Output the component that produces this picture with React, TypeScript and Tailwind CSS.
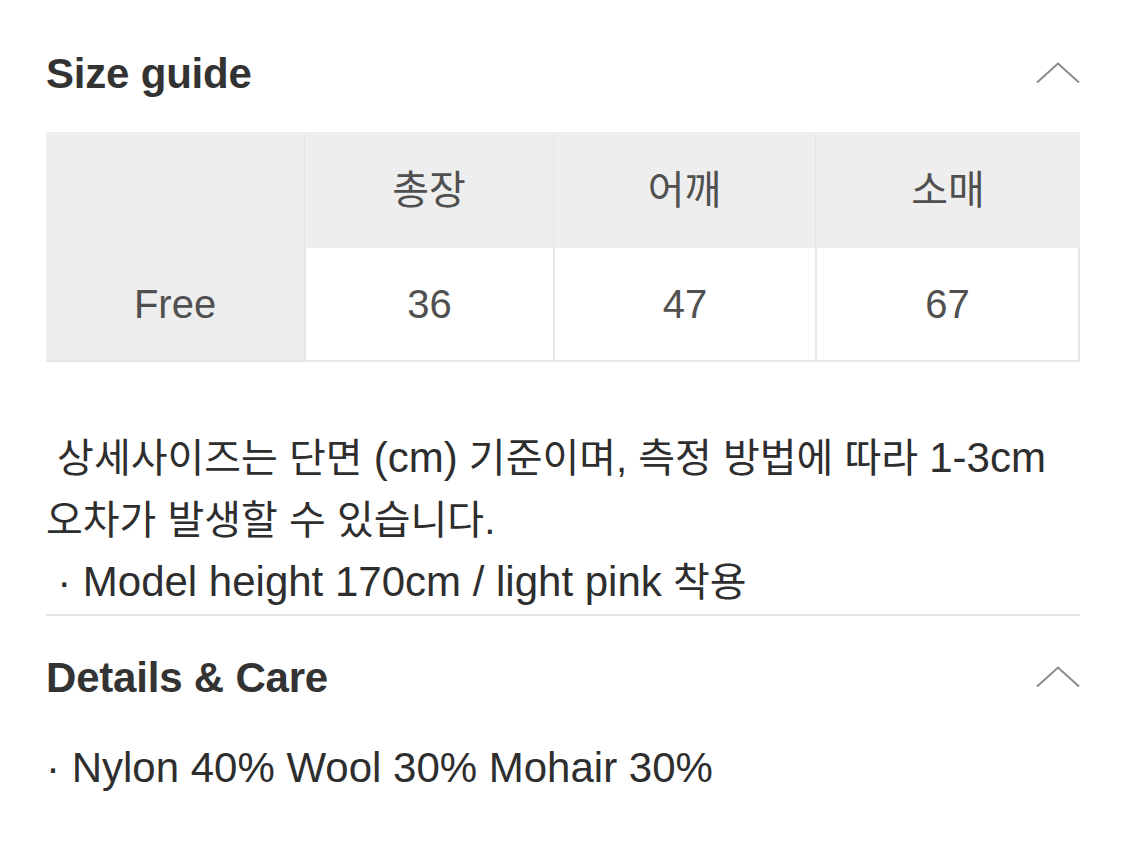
import React from "react";

const sizeColumns = [
  { label: "총장", value: "36" },
  { label: "어깨", value: "47" },
  { label: "소매", value: "67" },
];

const Chevron = () => (
  <svg width="44" height="22" viewBox="0 0 44 22" fill="none" className="shrink-0">
    <polyline points="1,20.5 22,1.5 43,20.5" stroke="#8a8a8a" strokeWidth="2" strokeLinejoin="miter" />
  </svg>
);

const SectionHeader: React.FC<{ title: string }> = ({ title }) => (
  <div className="flex items-center justify-between h-[74px]">
    <h2 className="text-[42px] font-bold text-[#333] tracking-[-0.2px]">{title}</h2>
    <Chevron />
  </div>
);

// latin runs are set a touch larger than the hangul, as on the original
const L: React.FC<{ children: React.ReactNode }> = ({ children }) => (
  <span className="text-[42px]">{children}</span>
);

export default function App() {
  return (
    <div className="min-h-screen bg-white font-['Liberation_Sans','Noto_Sans_CJK_KR',sans-serif]">
      <div className="w-[1034px] ml-[46px] pt-[36px]">
        {/* Size guide */}
        <SectionHeader title="Size guide" />

        <div className="mt-[22px] grid grid-cols-[258px_249px_262px_265px] text-[40px] text-[#505050]">
          <div className="h-[116px] bg-[#eeeeee]"></div>
          {sizeColumns.map((c) => (
            <div key={c.label} className="h-[116px] bg-[#eeeeee] border-l border-[#e6e6e6] flex items-center justify-center">
              {c.label}
            </div>
          ))}
          <div className="h-[114px] bg-[#eeeeee] border-b-2 border-[#e6e6e6] flex items-center justify-center">
            Free
          </div>
          {sizeColumns.map((c, i) => (
            <div
              key={c.value}
              className={`h-[114px] bg-white border-l-2 border-b-2 border-[#e8e8e8] flex items-center justify-center ${
                i === sizeColumns.length - 1 ? "border-r-2" : ""
              }`}
            >
              {c.value}
            </div>
          ))}
        </div>

        <div className="mt-[65px] text-[40px] leading-[62px] text-[#2e2e2e] whitespace-pre">
          <div> 상세사이즈는 단면 <L>(cm)</L> 기준이며, 측정 방법에 따라 <L>1-3cm</L></div>
          <div>오차가 발생할 수 있습니다.</div>
          <div> <L>· Model height 170cm / light pink</L> 착용</div>
        </div>

        <div className="h-[2px] bg-[#e2e2e2] mt-[1px]"></div>

        {/* Details & Care */}
        <div className="mt-[24px]">
          <SectionHeader title="Details & Care" />
        </div>

        <div className="mt-[23px] text-[42px] leading-[62px] text-[#2e2e2e] whitespace-pre">
          <div>· Nylon 40% Wool 30% Mohair 30%</div>
        </div>
      </div>
    </div>
  );
}
